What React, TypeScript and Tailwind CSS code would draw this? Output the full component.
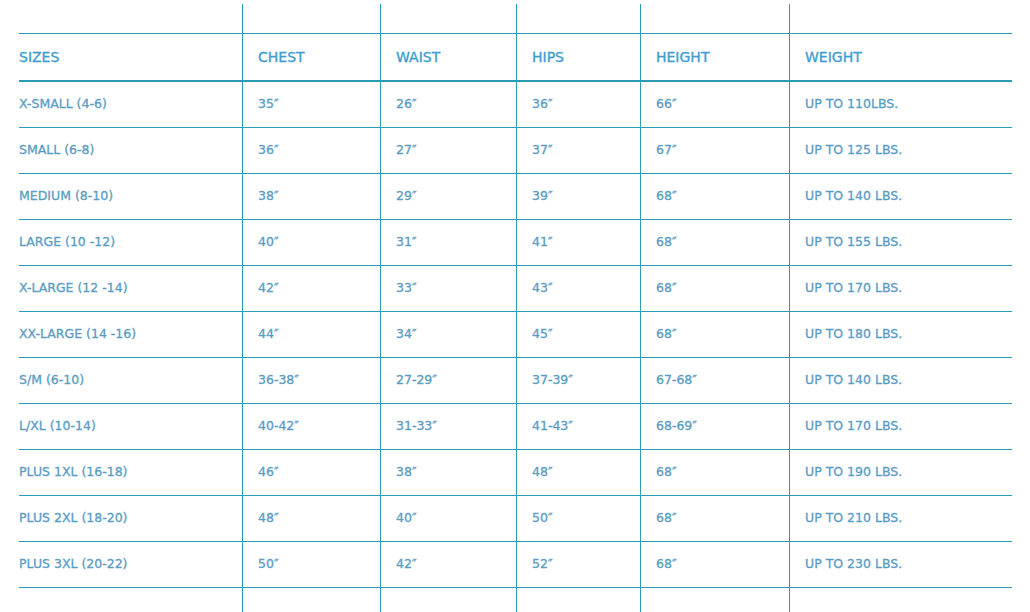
import React from "react";

const headers = ["SIZES", "CHEST", "WAIST", "HIPS", "HEIGHT", "WEIGHT"];

const rows = [
  ["X-SMALL (4-6)", "35″", "26″", "36″", "66″", "UP TO 110LBS."],
  ["SMALL (6-8)", "36″", "27″", "37″", "67″", "UP TO 125 LBS."],
  ["MEDIUM (8-10)", "38″", "29″", "39″", "68″", "UP TO 140 LBS."],
  ["LARGE (10 -12)", "40″", "31″", "41″", "68″", "UP TO 155 LBS."],
  ["X-LARGE (12 -14)", "42″", "33″", "43″", "68″", "UP TO 170 LBS."],
  ["XX-LARGE (14 -16)", "44″", "34″", "45″", "68″", "UP TO 180 LBS."],
  ["S/M (6-10)", "36-38″", "27-29″", "37-39″", "67-68″", "UP TO 140 LBS."],
  ["L/XL (10-14)", "40-42″", "31-33″", "41-43″", "68-69″", "UP TO 170 LBS."],
  ["PLUS 1XL (16-18)", "46″", "38″", "48″", "68″", "UP TO 190 LBS."],
  ["PLUS 2XL (18-20)", "48″", "40″", "50″", "68″", "UP TO 210 LBS."],
  ["PLUS 3XL (20-22)", "50″", "42″", "52″", "68″", "UP TO 230 LBS."],
];

// column widths in px, first one has no left rule
const widths = ["w-[223px]", "w-[138px]", "w-[136px]", "w-[124px]", "w-[149px]", "w-[223px]"];

const Row = ({
  cells,
  className,
  textClass,
}: {
  cells: string[];
  className: string;
  textClass: string;
}) => (
  <div className={`flex ${className}`}>
    {cells.map((c, i) => (
      <div
        key={i}
        className={`${widths[i]} shrink-0 flex items-center ${
          i === 0 ? "" : "border-l border-l-[#2a9bb3] pl-[15px]"
        } ${textClass}`}
      >
        {c}
      </div>
    ))}
  </div>
);

const Rule = ({ thick }: { thick?: boolean }) => (
  <div className={`${thick ? "h-[2px]" : "h-px"} w-full bg-[#2a9bb3]`} />
);

export default function App() {
  const empty = ["", "", "", "", "", ""];
  return (
    <div
      className="w-[1030px] h-[612px] overflow-hidden bg-white"
      style={{ fontFamily: '"DejaVu Sans", Verdana, sans-serif' }}
    >
      <div className="ml-[19px] mt-[4px] w-[993px]">
        <Row cells={empty} className="h-[29px]" textClass="" />
        <Rule />
        <Row
          cells={headers}
          className="h-[46px]"
          textClass="text-[14px] text-[#3d9ecf] [-webkit-text-stroke:0.35px]"
        />
        <Rule thick />
        {rows.map((r, i) => (
          <React.Fragment key={i}>
            <Row
              cells={r}
              className="h-[45px]"
              textClass="text-[12.5px] text-[#5a9cc4] [-webkit-text-stroke:0.3px]"
            />
            <Rule />
          </React.Fragment>
        ))}
        <Row cells={empty} className="h-[40px]" textClass="" />
      </div>
    </div>
  );
}
